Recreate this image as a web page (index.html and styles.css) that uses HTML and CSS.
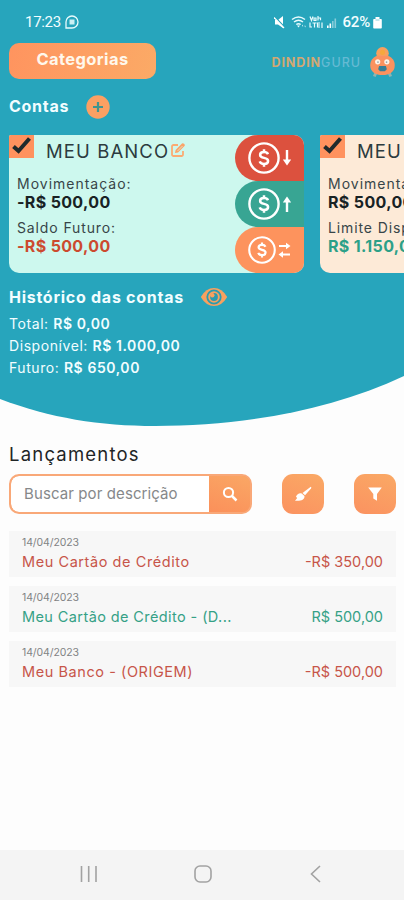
FILE: index.html
```html
<!DOCTYPE html>
<html lang="pt-BR">
<head>
<meta charset="utf-8">
<title>DindinGuru</title>
<link rel="stylesheet" href="styles.css">
</head>
<body>
<svg class="sprite" aria-hidden="true">
  <symbol id="check" viewBox="0 0 25 23"><path d="M4.500 11.500 9.500 16 20.500 3.500" fill="none" stroke="#202a2c" stroke-width="4"/></symbol>
  <symbol id="coin" viewBox="0 0 32 32"><circle cx="16" cy="16" r="14.600" fill="none" stroke="#fff" stroke-width="2.400"/><path d="M20 12.200c-.7-1.500-2.100-2.100-4-2.100-2.300 0-3.900 1-3.900 2.800 0 4.200 8 1.700 8 6 0 1.900-1.700 3-4.100 3-2.100 0-3.700-.8-4.300-2.500M16 7.300v2.800M16 21.700v3" fill="none" stroke="#fff" stroke-width="2.500"/></symbol>
</svg>
<div class="app">
  <section class="hero">
    <div class="status">
      <span class="time">17:23</span>
      <svg class="chat" viewBox="0 0 14 14"><path d="M1 13V7a6 6 0 1 1 6 6z" fill="none" stroke="#e8fbfd" stroke-width="1.300"/><path d="M4.500 4.500h5v5h-5z" fill="#e8fbfd" opacity=".85"/></svg>
      <svg class="signals" viewBox="0 0 66 14"><g fill="#fff"><path d="M1 5h3l5-4v12L4 9.500H1z"/><path d="M.500 1.500 10.500 12" stroke="#27a5bc" stroke-width="1.400"/><path d="M0 2.500 10 13" stroke="#fff" stroke-width="1.200"/></g>
        <g fill="none" stroke="#e8fbfd" stroke-width="1.500"><path d="M18 4.500q6.500-5 13 0M20 7q4.500-3.500 9 0M22.300 9.500q2.200-1.600 4.400 0"/></g><path d="M24.500 12.500l-1.500-2h3zM28 9.500l1.300 1.700H28zM31.500 12.500l-1.300-1.800h1.300z" fill="#e8fbfd"/>
        <g fill="none" stroke="#e8fbfd" stroke-width="1.200"><path d="M36 1.500l1.500 4L39 1.500M40 3h2v2.300h-2zM44 1v4.500M44 3h2.500v2.300M36 7.500v4.500h2M38.500 8h4M40.500 8v4.500M46 8h-2.500v4H46M43.500 10H46M48 7.500V13"/></g>
        <path d="M53 13v-2.500h1.600V13zM55.500 13V8.500h1.600V13z" fill="#fff"/><path d="M58 13V6h1.600v7zM60.500 13V3.500h1.600V13z" fill="#fff" opacity=".45"/></svg>
      <span class="battery">62%</span>
      <svg class="cell" viewBox="0 0 9 13"><path d="M2.500 1h4v2H8a.8.8 0 0 1 .8.800v8a.8.8 0 0 1-.8.800H1a.8.8 0 0 1-.8-.8v-8A.8.8 0 0 1 1 3h1.500z" fill="#fff"/><path d="M2.500 4h4" stroke="#8fd0dc"/></svg>
    </div>
    <header class="top">
      <button class="categories">Categorias</button>
      <div class="brand"><span class="din">DINDIN</span><span class="guru">GURU</span></div>
      <svg class="mascot" viewBox="0 0 28 34"><path d="M7 28l-1.500 3.500M21 28l1.500 3.500" stroke="#8cb5b2" stroke-width="3"/><circle cx="14" cy="7.500" r="6.500" fill="#f7a05e"/><path d="M8.500 10C3 12 1.300 16 1.300 20c0 6.500 5.500 10 12.700 10s12.700-3.500 12.700-10c0-4-1.700-8-7.200-10z" fill="#fb925f"/><circle cx="14" cy="6.500" r="2.600" fill="#f6a83c"/><circle cx="9" cy="16.300" r="2.700" fill="#fff3e8"/><circle cx="18.500" cy="16.300" r="2.700" fill="#fff3e8"/><circle cx="9.300" cy="16.500" r=".9" fill="#8fa3a8"/><circle cx="18.200" cy="16.500" r=".9" fill="#8fa3a8"/><path d="M10.500 20.500h7l1 3.500-2 2h-5l-2-2z" fill="#367f97"/></svg>
    </header>
    <div class="accounts-title">
      <h2>Contas</h2>
      <svg class="plus" viewBox="0 0 24 24"><circle cx="12" cy="12" r="11.700" fill="#fba063"/><path d="M12 7v10M7 12h10" stroke="#3f958f" stroke-width="2.200"/></svg>
    </div>
    <div class="cards">
      <article class="card mint">
        <div class="info">
          <div class="head"><span class="tick"><svg><use href="#check"/></svg></span><span class="name">MEU BANCO</span>
            <svg class="edit" viewBox="0 0 16 16"><path d="M8 3H3.500A1.500 1.500 0 0 0 2 4.500v8A1.500 1.500 0 0 0 3.500 14h8a1.500 1.500 0 0 0 1.500-1.500V9" fill="none" stroke="#fbab72" stroke-width="1.800"/><path d="M5 11l.6-3L12 1.500q1-.8 2 .200l.5.500q.8 1 0 1.800L8 10.500z" fill="#fba468"/><path d="M7.500 9l5-5" stroke="#d9efdc" stroke-width=".8"/></svg></div>
          <div class="label">Movimentação:</div><div class="money">-R$ 500,00</div>
          <div class="label second">Saldo Futuro:</div><div class="money neg">-R$ 500,00</div>
        </div>
        <div class="actions">
          <div class="action out"><svg class="coin"><use href="#coin"/></svg><svg class="arrow" viewBox="0 0 10 18"><path d="M5 1v11" stroke="#fff" stroke-width="2.400"/><path d="M.8 10.500h8.400L5 16.500z" fill="#fff"/></svg></div>
          <div class="action in"><svg class="coin"><use href="#coin"/></svg><svg class="arrow" viewBox="0 0 10 18"><path d="M5 17V6" stroke="#fff" stroke-width="2.400"/><path d="M.8 7.500h8.400L5 1.500z" fill="#fff"/></svg></div>
          <div class="action move"><svg class="coin small"><use href="#coin"/></svg><svg class="swap" viewBox="0 0 13 16"><path d="M1 4h8M4 12.500h8" stroke="#fff" stroke-width="2"/><path d="M8 .800 12.500 4 8 7.200zM5 9.300.500 12.500 5 15.700z" fill="#fff"/></svg></div>
        </div>
      </article>
      <article class="card cream">
        <div class="info">
          <div class="head"><span class="tick"><svg><use href="#check"/></svg></span><span class="name">MEU</span></div>
          <div class="label">Movimentação:</div><div class="money">R$ 500,00</div>
          <div class="label second">Limite Disponível:</div><div class="money pos">R$ 1.150,00</div>
        </div>
      </article>
    </div>
    <div class="history-title"><h2>Histórico das contas</h2>
      <svg class="eye" viewBox="0 0 28 20"><path d="M.8 10Q6 1 14 1t13.200 9Q22 19 14 19T.8 10z" fill="#f8a15f"/><circle cx="14" cy="10" r="6.700" fill="none" stroke="#2a9bb0" stroke-width="1.800"/><circle cx="14" cy="10" r="3.900" fill="#2a9bb0"/><circle cx="12.300" cy="8.300" r="2.200" fill="#f8a15f"/></svg></div>
    <p>Total: <b>R$ 0,00</b></p>
    <p>Disponível: <b>R$ 1.000,00</b></p>
    <p>Futuro: <b>R$ 650,00</b></p>
  </section>
  <svg class="curve" viewBox="0 0 404 50"><path d="M0 0H404C330 35 240 50 155 50 100 50 50 42 0 23z" fill="#27a5bc"/></svg>
  <main>
    <h1>Lançamentos</h1>
    <div class="tools">
      <div class="search"><div class="field">Buscar por descrição</div><div class="go"><svg viewBox="0 0 16 16"><circle cx="6.500" cy="6.500" r="4.600" fill="none" stroke="#fff" stroke-width="2"/><path d="M10 10l4.500 4.500" stroke="#fff" stroke-width="2.500"/></svg></div></div>
      <div class="tool"><svg viewBox="0 0 18 16"><path d="M16.800.800q1 .6.200 1.700L11 9.300 8.500 7z" fill="#fff"/><path d="M7.700 7.500l2.800 2.600c.3 4-4.300 5.200-9.500 4.600L3.200 12 2 10.700c1-2.800 3.500-4 5.700-3.200z" fill="#fff"/></svg></div>
      <div class="tool"><svg viewBox="0 0 18 16"><path d="M2.200 1.500h13.600L11 8v6.800L7.300 12.500V8z" fill="#fff"/></svg></div>
    </div>
    <ul>
      <li class="neg"><time>14/04/2023</time><div class="row"><span class="title">Meu Cartão de Crédito</span><span class="amount">-R$ 350,00</span></div></li>
      <li class="pos"><time>14/04/2023</time><div class="row"><span class="title tight">Meu Cartão de Crédito - (D...</span><span class="amount">R$ 500,00</span></div></li>
      <li class="neg"><time>14/04/2023</time><div class="row"><span class="title">Meu Banco - (ORIGEM)</span><span class="amount">-R$ 500,00</span></div></li>
    </ul>
  </main>
  <nav>
    <svg viewBox="0 0 18 18"><path d="M1.500 1v16M8.700 1v16M16 1v16"/></svg>
    <svg viewBox="0 0 18 18"><rect x="1" y="1" width="16" height="16" rx="5"/></svg>
    <svg viewBox="0 0 18 18"><path d="M13 1 4.500 9l8.500 8"/></svg>
  </nav>
</div>
</body>
</html>
```
FILE: styles.css
```css
* { box-sizing: border-box; }
body { margin: 0; font-family: Inter, sans-serif; background: #fdfdfd; color: #1f2526; }
h1, h2, p, ul { margin: 0; padding: 0; font-weight: 400; }
svg { display: block; flex: none; }
.sprite { position: absolute; width: 0; height: 0; }
.app { width: 404px; height: 900px; overflow: hidden; display: flex; flex-direction: column; }
.hero { height: 376px; background: #27a5bc; color: #f2fdff; }
.status { height: 43px; padding: 1px 22px 0 25px; display: flex; align-items: center; font: 400 15px Roboto, sans-serif; }
.time { letter-spacing: -.3px; }
.chat { width: 14px; height: 14px; margin-left: 4px; }
.signals { width: 66px; height: 14px; margin-left: auto; }
.battery { margin-left: 3px; font-weight: 500; letter-spacing: -.2px; }
.cell { width: 9px; height: 13px; margin-left: 3px; }
.top { height: 36px; padding: 0 8px 0 9px; display: flex; align-items: center; }
.categories { width: 147px; height: 36px; padding: 0 0 4px; border: 0; border-radius: 10px; background: linear-gradient(100deg, #ff945f, #fbaa66); color: #fff8ec; font: 700 16.5px/20px Inter, sans-serif; letter-spacing: .4px; }
.brand { margin: 2px 0 0 auto; font-size: 12.5px; display: flex; }
.din { color: #d3a873; font-weight: 700; letter-spacing: .9px; }
.guru { color: #65bad3; font-weight: 500; letter-spacing: 1px; }
.mascot { width: 27px; height: 33px; margin: 3px 0 0 8px; }
.accounts-title { height: 56px; padding: 0 9px 2px; display: flex; align-items: center; }
h2 { font-size: 16px; font-weight: 700; letter-spacing: .73px; }
.plus { width: 24px; height: 24px; margin: 2px 0 0 17px; }
.cards { display: flex; gap: 16px; padding-left: 9px; overflow: hidden; }
.card { width: 295px; height: 138px; flex: none; display: flex; justify-content: space-between; overflow: hidden; border-radius: 2px 10px 10px 10px; color: #182224; }
.mint { background: #cdf8ee; }
.cream { background: #fdead7; }
.head { display: flex; height: 33px; }
.tick, .tick svg { width: 25px; height: 23px; }
.tick { background: #ff925e; }
.name { font-size: 18.5px; line-height: 33px; margin-left: 12px; letter-spacing: 1.1px; color: #2c3b3e; }
.edit { width: 16px; height: 16px; margin: 7px 0 0 1px; }
.label { font-size: 14px; line-height: 18px; height: 18px; padding-left: 8px; margin-top: 7px; color: #384548; white-space: nowrap; letter-spacing: 1px; }
.label.second { margin-top: 8px; letter-spacing: .88px; }
.money { font-size: 16px; line-height: 18px; height: 18px; padding-left: 8px; font-weight: 700; letter-spacing: .35px; white-space: nowrap; }
.money.neg { color: #cc4a2f; }
.money.pos { color: #2ca088; }
.actions { width: 69px; }
.action { height: 46px; border-radius: 23px 0 0 23px; display: flex; align-items: center; padding-left: 13px; }
.out { background: #dc513e; }
.in { background: #38a593; }
.move { background: #fd935d; }
.coin { width: 32px; height: 32px; }
.coin.small { width: 28px; height: 28px; }
.arrow { width: 10px; height: 18px; margin-left: 2px; }
.swap { width: 13px; height: 16px; margin-left: 2px; }
.history-title { height: 40px; padding: 8px 9px 0; display: flex; align-items: center; }
.eye { width: 28px; height: 20px; margin-left: 16px; }
.hero p { padding-left: 9px; font-size: 14px; line-height: 22px; letter-spacing: .57px; }
.hero b { font-weight: 600; }
.curve { width: 404px; height: 50px; }
main { flex: 1; padding: 15px 8px 0 9px; }
h1 { font-size: 18.5px; line-height: 27px; height: 33px; letter-spacing: 1.2px; }
.tools { display: flex; justify-content: space-between; height: 40px; }
.search { width: 243px; display: flex; border: 2px solid #f9a878; border-radius: 10px; overflow: hidden; background: #f99b60; }
.field { width: 198px; padding-left: 13px; background: #fff; color: #86888a; font-size: 15px; line-height: 36px; letter-spacing: .1px; border-radius: 8px 0 0 8px; }
.go { flex: 1; display: flex; align-items: center; justify-content: center; background: linear-gradient(20deg, #fb905a, #faa765); }
.go svg { width: 16px; height: 16px; }
.tool { width: 42px; display: flex; align-items: center; justify-content: center; border-radius: 11px; background: linear-gradient(20deg, #fb9260, #faa965); }
.tool svg { width: 18px; height: 16px; }
ul { list-style: none; margin-top: 17px; display: flex; flex-direction: column; gap: 9px; }
li { height: 46px; padding: 5px 13px; background: #f7f7f7; }
time { display: block; font-size: 10.5px; line-height: 14px; letter-spacing: -.1px; color: #818384; }
.row { display: flex; justify-content: space-between; font-size: 14.5px; line-height: 23px; }
.title { letter-spacing: .57px; }
.title.tight { letter-spacing: .4px; }
li.neg { color: #c75549; }
li.pos { color: #35a186; }
nav { height: 50px; background: #f4f4f4; display: flex; justify-content: space-between; padding: 15px 79px 0 80px; }
nav svg { width: 18px; height: 18px; fill: none; stroke: #a2a2a2; stroke-width: 1.6; }
```
